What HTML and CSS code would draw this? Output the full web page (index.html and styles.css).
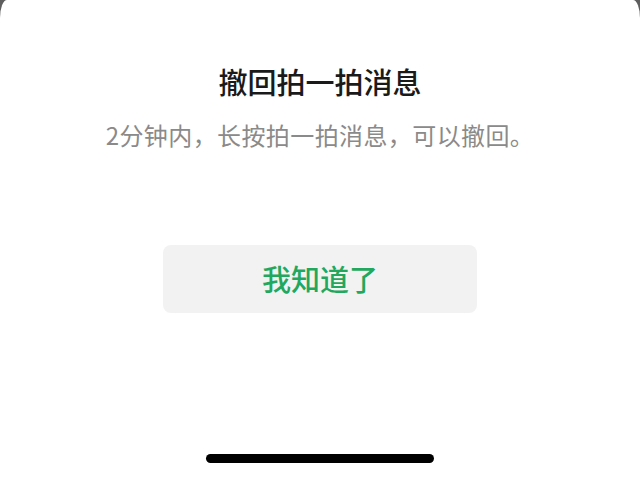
FILE: index.html
```html
<!DOCTYPE html>
<html lang="zh-CN">
<head>
    <meta charset="UTF-8">
    <meta name="viewport" content="width=device-width, initial-scale=1.0">
    <title>撤回拍一拍消息</title>
    <link rel="stylesheet" href="styles.css">
</head>
<body>
    <div class="sheet">
        <h1 class="title">撤回拍一拍消息</h1>
        <p class="desc">2分钟内，长按拍一拍消息，可以撤回。</p>
        <button class="btn">我知道了</button>
        <div class="home-bar"></div>
    </div>
</body>
</html>
```

FILE: styles.css
```css
/* Feuille de base */
* {
    margin: 0;
    padding: 0;
    box-sizing: border-box;
}

body {
    background-color: #5e5e5e;
    font-family: "Noto Sans CJK SC", "Noto Sans", sans-serif;
    width: 640px;
    height: 477px;
    overflow: hidden;
}

.sheet {
    background-color: #fff;
    height: 477px;
    border-top-left-radius: 7px 18px;
    border-top-right-radius: 7px 18px;
    display: flex;
    flex-direction: column;
    align-items: center;
    padding-top: 61px;
}

.title {
    font-size: 29px;
    line-height: 40px;
    font-weight: 500;
    color: #1a1a1a;
}

.desc {
    margin-top: 17px;
    font-size: 24px;
    line-height: 34px;
    letter-spacing: 0.4px;
    color: #8a8a8a;
}

.btn {
    margin-top: 93px;
    width: 314px;
    height: 68px;
    padding-bottom: 3px;
    border: none;
    border-radius: 8px;
    background-color: #f2f2f2;
    color: #1fa85e;
    font-family: inherit;
    font-size: 29px;
    font-weight: 500;
}

.home-bar {
    margin-top: 141px;
    width: 228px;
    height: 9px;
    border-radius: 5px;
    background-color: #000;
}
```
